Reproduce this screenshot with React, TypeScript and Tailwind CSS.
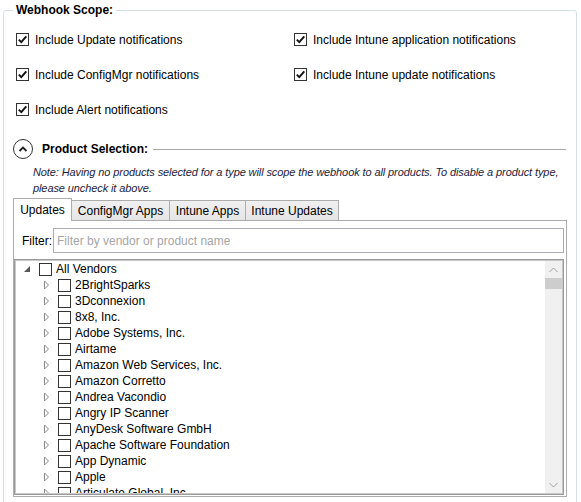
import React from "react";

const Check = () => (
  <svg width="11" height="11" viewBox="0 0 11 11" className="block">
    <path d="M1.8 5.6 L4.3 8.2 L9.3 2.3" fill="none" stroke="#111" strokeWidth="1.9" />
  </svg>
);

function CheckBox({ checked }: { checked?: boolean }) {
  return (
    <div className="w-[13px] h-[13px] border border-[#333333] bg-white flex items-center justify-center shrink-0">
      {checked ? <Check /> : null}
    </div>
  );
}

function ScopeItem({ label }: { label: string }) {
  return (
    <div className="h-[35px] flex items-center">
      <CheckBox checked />
      <span className="ml-[6px]">{label}</span>
    </div>
  );
}

const vendors = [
  "2BrightSparks",
  "3Dconnexion",
  "8x8, Inc.",
  "Adobe Systems, Inc.",
  "Airtame",
  "Amazon Web Services, Inc.",
  "Amazon Corretto",
  "Andrea Vacondio",
  "Angry IP Scanner",
  "AnyDesk Software GmbH",
  "Apache Software Foundation",
  "App Dynamic",
  "Apple",
  "Articulate Global, Inc.",
];

function TreeRow({ label, level, expanded }: { label: string; level: number; expanded?: boolean }) {
  return (
    <div className={"h-[16px] flex items-center " + (level === 0 ? "pl-[3px]" : "pl-[22px]")}>
      <div className="w-[16px] h-[16px] flex items-center justify-center shrink-0">
        {expanded ? (
          <svg width="8" height="8" viewBox="0 0 8 8">
            <path d="M7 1 L7 7 L1 7 Z" fill="#595959" />
          </svg>
        ) : (
          <svg width="8" height="10" viewBox="0 0 8 10">
            <path d="M2.5 1 L6.5 5 L2.5 9 Z" fill="white" stroke="#8a8a8a" strokeWidth="1" />
          </svg>
        )}
      </div>
      <div className="ml-[4px]">
        <CheckBox />
      </div>
      <span className="ml-[4px] whitespace-nowrap leading-[16px]">{label}</span>
    </div>
  );
}

export default function App() {
  return (
    <div className="w-[581px] h-[502px] overflow-hidden bg-white font-['Segoe_UI','Liberation_Sans',sans-serif] text-[12px] text-black">
      <div className="relative ml-[3px] mr-[4px] mt-[10px] h-[560px] border border-[#d5dfe5] rounded-[3px]">
        <div className="absolute left-[9px] top-[-9px] bg-white px-[3px] font-bold leading-[16px]">
          Webhook Scope:
        </div>

        <div className="pt-[11px] pl-[12px] grid grid-cols-[278px_1fr]">
          <ScopeItem label="Include Update notifications" />
          <ScopeItem label="Include Intune application notifications" />
          <ScopeItem label="Include ConfigMgr notifications" />
          <ScopeItem label="Include Intune update notifications" />
          <ScopeItem label="Include Alert notifications" />
        </div>

        <div className="mt-[12px] ml-[9px] mr-[10px] h-[20px] flex items-center">
          <div className="w-[20px] h-[20px] rounded-full border border-[#333333] bg-white flex items-center justify-center shrink-0">
            <svg width="10" height="8" viewBox="0 0 10 8">
              <path d="M1.5 6 L5 2.5 L8.5 6" fill="none" stroke="#222" strokeWidth="1.8" />
            </svg>
          </div>
          <span className="ml-[9px] font-bold whitespace-nowrap">Product Selection:</span>
          <div className="ml-[5px] flex-1 h-px bg-[#a8a8a8]" />
        </div>

        <div className="mt-[5px] pl-[29px] italic leading-[16px] text-[11px] tracking-[-0.1px] whitespace-nowrap text-[#1c1c3c]">
          Note: Having no products selected for a type will scope the webhook to all products. To disable a product type,
          <br />
          please uncheck it above.
        </div>

        <div className="mt-[2px] ml-[9px] mr-[9px]">
          <div className="flex items-end h-[22px]">
            <div className="w-[59px] h-[23px] -mb-px relative z-10 bg-white border border-[#acacac] border-b-0 flex items-center justify-center">
              Updates
            </div>
            <div className="w-[98px] h-[20px] bg-gradient-to-b from-[#f0f0f0] to-[#e5e5e5] border border-[#acacac] border-l-0 border-b-0 flex items-center justify-center">
              ConfigMgr Apps
            </div>
            <div className="w-[76px] h-[20px] bg-gradient-to-b from-[#f0f0f0] to-[#e5e5e5] border border-[#acacac] border-l-0 border-b-0 flex items-center justify-center">
              Intune Apps
            </div>
            <div className="w-[93px] h-[20px] bg-gradient-to-b from-[#f0f0f0] to-[#e5e5e5] border border-[#acacac] border-l-0 border-b-0 flex items-center justify-center">
              Intune Updates
            </div>
          </div>
          <div className="h-[277px] border border-[#acacac] bg-white pr-[2px] pb-[1px] flex flex-col">
            <div className="mt-[7px] flex items-center h-[25px]">
              <span className="ml-[8px] w-[30px]">Filter:</span>
              <div className="ml-[1px] flex-1 h-[25px] border border-[#abadb3] flex items-center pl-[3px] text-[#a6a6a6]">
                Filter by vendor or product name
              </div>
            </div>
            <div className="mt-[6px] flex-1 border border-[#9a9a9a] overflow-hidden">
              <div className="h-full border border-[#c8c8c8] flex overflow-hidden">
                <div className="flex-1 overflow-hidden">
                  <TreeRow label="All Vendors" level={0} expanded />
                  {vendors.map((v) => (
                    <TreeRow key={v} label={v} level={1} />
                  ))}
                </div>
                <div className="w-[17px] bg-[#f0f0f0] flex flex-col items-center">
                  <div className="h-[17px] flex items-center justify-center">
                    <svg width="9" height="6" viewBox="0 0 9 6">
                      <path d="M0.5 5 L4.5 1 L8.5 5" fill="none" stroke="#a0a0a0" strokeWidth="1" />
                    </svg>
                  </div>
                  <div className="w-full h-[11px] bg-[#cdcdcd]" />
                  <div className="flex-1" />
                  <div className="h-[17px] flex items-center justify-center">
                    <svg width="9" height="6" viewBox="0 0 9 6">
                      <path d="M0.5 1 L4.5 5 L8.5 1" fill="none" stroke="#a0a0a0" strokeWidth="1" />
                    </svg>
                  </div>
                </div>
              </div>
            </div>
          </div>
        </div>
      </div>
    </div>
  );
}
